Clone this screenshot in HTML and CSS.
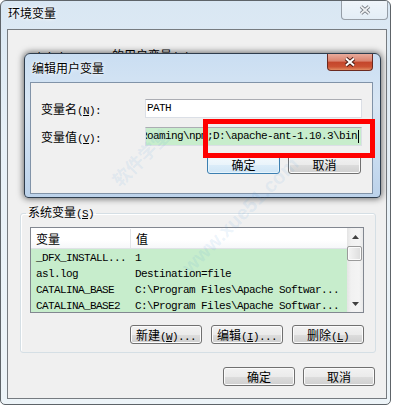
FILE: index.html
```html
<!DOCTYPE html>
<html lang="zh-CN">
<head>
    <meta charset="UTF-8">
    <title>环境变量</title>
    <link rel="stylesheet" href="styles.css">
</head>
<body>
    <!-- 环境变量 window (inactive) -->
    <div class="window">
        <div class="title-bar">
            <span class="title">环境变量</span>
            <span class="close-btn">
                <svg width="12" height="10" viewBox="0 0 12 10">
                    <path d="M2 1.5 L10 8.5 M10 1.5 L2 8.5" stroke="#6a7078" stroke-width="3.6" fill="none"/>
                    <path d="M2 1.5 L10 8.5 M10 1.5 L2 8.5" stroke="#eef0f2" stroke-width="1.8" fill="none"/>
                </svg>
            </span>
        </div>

        <div class="client">
            <!-- User variables (mostly covered by the dialog) -->
            <div class="user-group">
                <span class="en">Administrator </span>的用户变量<span class="en">(<u>U</u>)</span>
            </div>

            <!-- System variables -->
            <fieldset class="group">
                <legend>系统变量<span class="en">(<u>S</u>)</span></legend>
                <div class="list">
                    <div class="list-body">
                        <div class="list-header">
                            <div class="col-name">变量</div>
                            <div class="col-value">值</div>
                        </div>
                        <div class="list-row">
                            <div class="col-name en">_DFX_INSTALL...</div>
                            <div class="col-value en">1</div>
                        </div>
                        <div class="list-row">
                            <div class="col-name en">asl.log</div>
                            <div class="col-value en">Destination=file</div>
                        </div>
                        <div class="list-row">
                            <div class="col-name en">CATALINA_BASE</div>
                            <div class="col-value en">C:\Program Files\Apache Softwar...</div>
                        </div>
                        <div class="list-row">
                            <div class="col-name en">CATALINA_BASE2</div>
                            <div class="col-value en">C:\Program Files\Apache Softwar...</div>
                        </div>
                    </div>
                    <div class="scrollbar">
                        <div class="scroll-arrow">
                            <svg width="7" height="4" viewBox="0 0 7 4"><path d="M3.5 0 L7 4 L0 4 Z" fill="#404040"/></svg>
                        </div>
                        <div class="scroll-thumb"></div>
                        <div class="scroll-arrow scroll-down">
                            <svg width="7" height="4" viewBox="0 0 7 4"><path d="M0 0 L7 0 L3.5 4 Z" fill="#404040"/></svg>
                        </div>
                    </div>
                </div>
                <div class="btn-row">
                    <button class="btn">新建<span class="en">(<u>W</u>)...</span></button>
                    <button class="btn">编辑<span class="en">(<u>I</u>)...</span></button>
                    <button class="btn">删除<span class="en">(<u>L</u>)</span></button>
                </div>
            </fieldset>

            <div class="btn-row bottom-row">
                <button class="btn">确定</button>
                <button class="btn">取消</button>
            </div>
        </div>
    </div>

    <!-- 编辑用户变量 dialog (active, on top) -->
    <div class="dialog">
        <div class="dialog-title-bar">
            <span class="dialog-title">编辑用户变量</span>
            <span class="close-btn-active">
                <svg width="12" height="10" viewBox="0 0 12 10">
                    <path d="M2 1.5 L10 8.5 M10 1.5 L2 8.5" stroke="#4a1a12" stroke-width="3.8" fill="none"/>
                    <path d="M2 1.5 L10 8.5 M10 1.5 L2 8.5" stroke="#ffffff" stroke-width="2" fill="none"/>
                </svg>
            </span>
        </div>
        <div class="dialog-client">
            <div class="field-row">
                <label class="field-label">变量名<span class="en">(<u>N</u>):</span></label>
                <div class="input en">PATH</div>
            </div>
            <div class="field-row">
                <label class="field-label">变量值<span class="en">(<u>V</u>):</span></label>
                <div class="input input-selected en">
                    <span class="input-text">Roaming\npm;D:\apache-ant-1.10.3\bin</span>
                    <span class="caret"></span>
                </div>
            </div>
            <div class="btn-row dialog-btns">
                <button class="btn btn-default">确定</button>
                <button class="btn">取消</button>
            </div>
        </div>
    </div>

    <!-- red annotation box -->
    <div class="highlight"></div>

    <!-- watermark -->
    <div class="watermark wm-cn">软件学堂</div>
    <div class="watermark wm-url">www.xue51.com</div>
</body>
</html>
```

FILE: styles.css
```css
/* General */
* {
    box-sizing: border-box;
}

body {
    margin: 0;
    width: 394px;
    height: 406px;
    position: relative;
    overflow: hidden;
    background: #ffffff;
    font-family: "Noto Sans CJK SC", "Liberation Sans", sans-serif;
    font-size: 12px;
    color: #000;
}

/* SimSun-like half width latin text */
.en {
    font-family: "Liberation Mono", "Noto Sans CJK SC", monospace;
    font-size: 11px;
    letter-spacing: -0.6px;
}

u {
    text-decoration-thickness: 1px;
}

/* Outer window */
.window {
    width: 391px;
    height: 405px;
    border: 1px solid #5e6469;
    border-radius: 6px 6px 5px 5px;
    padding: 0 3px 5px 6px;
    background: linear-gradient(to bottom, #d9e7f3 0%, #e7f0f7 35%, #edf4f8 100%);
    display: flex;
    flex-direction: column;
}

.title-bar {
    height: 28px;
    display: flex;
    justify-content: space-between;
    align-items: flex-start;
}

.title {
    margin: 5px 0 0 1px;
    line-height: 14px;
    text-shadow: 0 0 4px #fff, 0 0 2px #fff;
}

.close-btn {
    width: 47px;
    height: 19px;
    margin-right: -1px;
    border: 1px solid rgba(80, 90, 100, 0.55);
    border-top: none;
    border-radius: 0 0 4px 4px;
    background: linear-gradient(to bottom, rgba(255, 255, 255, 0.6), rgba(255, 255, 255, 0.25));
    display: flex;
    justify-content: center;
    align-items: center;
}

.client {
    flex: 1;
    border: 1px solid #767b80;
    background: #f0f0f0;
    padding: 18px 10px 0 12px;
    display: flex;
    flex-direction: column;
}

.user-group {
    height: 157px;
    padding-left: 8px;
    line-height: 14px;
}

/* Group box */
.group {
    margin: 0;
    height: 148px;
    border: 1px solid #d5dfe5;
    border-radius: 3px;
    padding: 6px 11px 10px 9px;
    box-shadow: inset 1px 1px 0 #fff;
}

.group legend {
    padding: 0 2px;
    margin-left: -4px;
    line-height: 14px;
}

/* List view */
.list {
    height: 86px;
    border: 1px solid #828790;
    display: flex;
}

.list-body {
    flex: 1;
    overflow: hidden;
    background: #c7edcc;
}

.list-header {
    height: 21px;
    display: flex;
    background: linear-gradient(to bottom, #ffffff 0%, #ffffff 60%, #f6f7f9 100%);
    border-bottom: 1px solid #dfe2e6;
    padding-top: 1px;
    line-height: 19px;
}

.list-header .col-name {
    border-right: 1px solid #e3e5e8;
}

.list-header .col-value {
    padding-left: 5px;
}

.col-name {
    width: 100px;
    padding-left: 5px;
    white-space: nowrap;
    overflow: hidden;
}

.col-value {
    flex: 1;
    padding-left: 4px;
    white-space: nowrap;
    overflow: hidden;
}

.list-row {
    height: 16px;
    display: flex;
    padding-top: 3px;
    line-height: 13px;
}

/* Scrollbar */
.scrollbar {
    width: 16px;
    display: flex;
    flex-direction: column;
    background: linear-gradient(to right, #e4e4e4 0%, #f1f1f1 25%, #f4f4f4 75%, #e9e9e9 100%);
}

.scroll-arrow {
    height: 17px;
    display: flex;
    justify-content: center;
    align-items: center;
}

.scroll-down {
    margin-top: auto;
}

.scroll-thumb {
    width: 15px;
    height: 15px;
    margin-top: 1px;
    border: 1px solid #9a9a9a;
    border-radius: 2px;
    background: linear-gradient(to right, #f5f5f5 0%, #e9e9e9 50%, #dcdcdc 100%);
    box-shadow: inset 0 0 0 1px #fbfbfb;
}

/* Buttons */
.btn-row {
    display: flex;
    justify-content: flex-end;
    gap: 9px;
    margin-top: 12px;
}

.btn {
    width: 72px;
    height: 19px;
    padding: 0;
    border: 1px solid #707070;
    border-radius: 3px;
    background: linear-gradient(to bottom, #f2f2f2 0%, #ebebeb 50%, #dddddd 51%, #cfcfcf 100%);
    box-shadow: inset 0 0 0 1px #fbfbfb;
    font-family: "Noto Sans CJK SC", sans-serif;
    font-size: 12px;
    line-height: 17px;
    color: #000;
}

.bottom-row {
    margin-top: 14px;
    gap: 8px;
    padding-right: 1px;
}

.btn-default {
    border-color: #3c7fb1;
    background: linear-gradient(to bottom, #f4f9fd 0%, #eaf4fb 50%, #dcedf9 51%, #cfe5f6 100%);
    box-shadow: inset 0 0 0 1px #e6f4fc;
}

/* Edit dialog */
.dialog {
    position: absolute;
    left: 24px;
    top: 53px;
    width: 357px;
    height: 145px;
    border: 1px solid #2f3d4d;
    border-radius: 6px 6px 4px 4px;
    padding: 0 7px 3px 5px;
    background: linear-gradient(to bottom, #cadef2 0%, #d8e6f4 35%, #c9dcf0 70%, #bcd2ea 100%);
    box-shadow: 0 0 6px 1px rgba(0, 0, 0, 0.55);
    display: flex;
    flex-direction: column;
}

.dialog-title-bar {
    height: 28px;
    display: flex;
    justify-content: space-between;
    align-items: flex-start;
}

.dialog-title {
    margin: 7px 0 0 2px;
    line-height: 14px;
    text-shadow: 0 0 5px #fff, 0 0 2px #fff;
}

.close-btn-active {
    width: 46px;
    height: 17px;
    border: 1px solid #6b2a20;
    border-top: none;
    border-radius: 0 0 4px 4px;
    background: linear-gradient(to bottom, #e9ab9c 0%, #da826d 45%, #c4452b 50%, #cb5233 80%, #e18c62 100%);
    display: flex;
    justify-content: center;
    align-items: center;
}

.dialog-client {
    height: 112px;
    border: 1px solid #8193a8;
    background: #f0f0f0;
    padding: 16px 10px 0 10px;
}

.field-row {
    display: flex;
    height: 19px;
    margin-bottom: 9px;
}

.field-label {
    width: 104px;
    line-height: 19px;
}

.input {
    flex: 1;
    border: 1px solid #dbdfe6;
    border-top-color: #abadb3;
    background: #ffffff;
    padding-left: 1px;
    line-height: 17px;
    white-space: nowrap;
    overflow: hidden;
}

.input-selected {
    background: #c7edcc;
    display: flex;
    justify-content: flex-end;
    align-items: center;
    padding-right: 2px;
}

.input-text {
    flex-shrink: 0;
}

.caret {
    flex-shrink: 0;
    width: 1px;
    height: 13px;
    margin-left: 1px;
    background: #000;
}

.dialog-btns {
    margin-top: 4px;
    gap: 8px;
    padding-right: 1px;
}

.dialog-btns .btn {
    width: 73px;
}

/* Red annotation */
.highlight {
    position: absolute;
    left: 203px;
    top: 119px;
    width: 172px;
    height: 39px;
    border: 5px solid #ff0000;
}

/* Watermark */
.watermark {
    position: absolute;
    color: rgba(80, 155, 220, 0.11);
    font-weight: bold;
    white-space: nowrap;
    text-align: center;
    transform: rotate(-45deg);
    pointer-events: none;
}

.wm-cn {
    left: 100px;
    top: 145px;
    width: 80px;
    font-size: 18px;
    line-height: 24px;
}

.wm-url {
    left: 160px;
    top: 203px;
    width: 160px;
    font-family: "Liberation Sans", sans-serif;
    font-size: 20px;
    line-height: 24px;
}
```
